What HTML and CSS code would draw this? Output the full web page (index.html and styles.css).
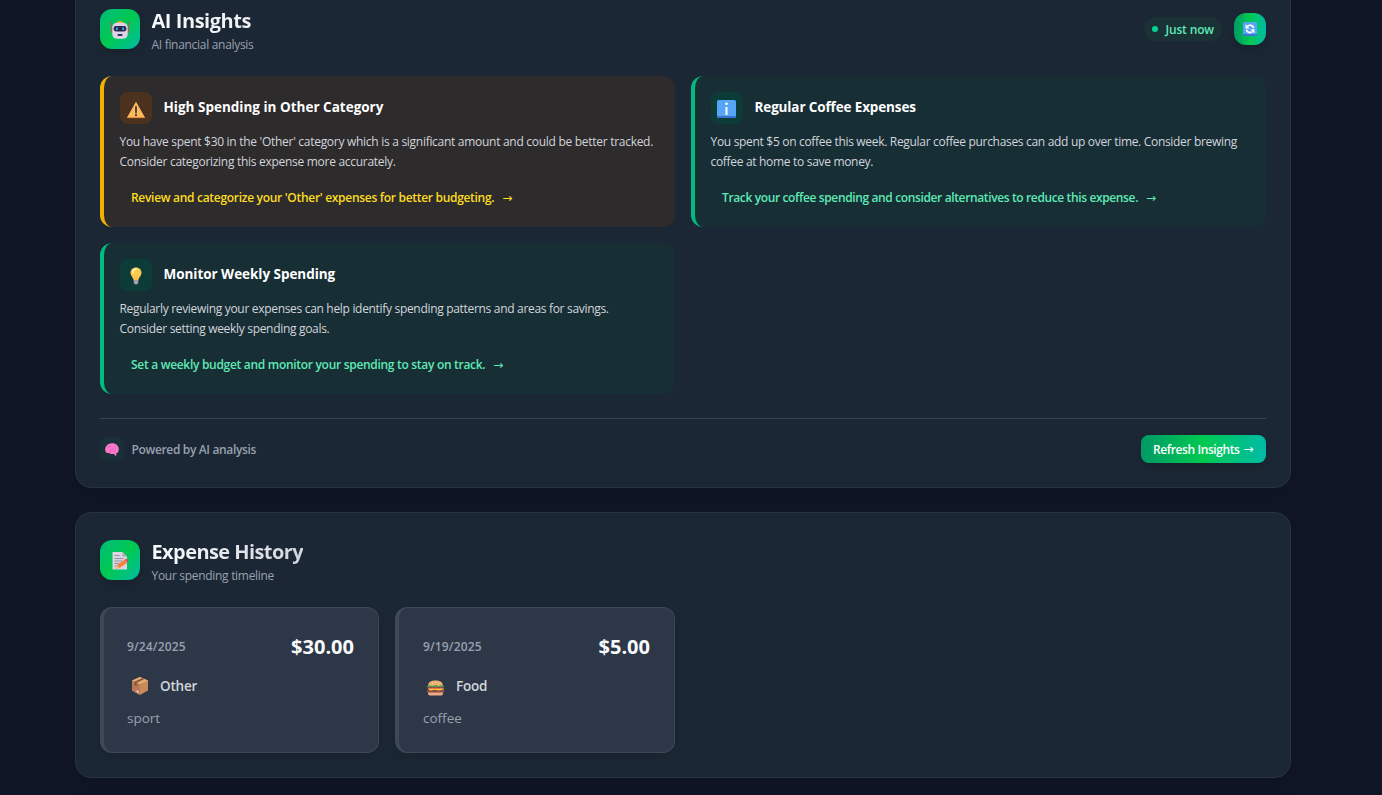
FILE: index.html
```html
<!DOCTYPE html>
<html lang="en">
<head>
<meta charset="utf-8">
<title>Expense Tracker</title>
<link rel="stylesheet" href="styles.css">
</head>
<body>
<main class="page">
  <section class="panel">
    <header class="panel-head">
      <div class="brand">
        <div class="badge">
          <svg width="20" height="20" viewBox="0 0 20 20"><rect x="7" y="2.200" width="6" height="3" rx="1.400" fill="#f9a825"/><path d="M1.600 3v7M18.400 3v7" stroke="#c2456b" stroke-width="1"/><rect x="1" y="9" width="2.400" height="5" rx="1" fill="#d0486a"/><rect x="16.600" y="9" width="2.400" height="5" rx="1" fill="#d0486a"/><rect x="2.300" y="3.700" width="15.400" height="16" rx="4.500" fill="#ddd3e6"/><rect x="3.600" y="7" width="12.800" height="5.400" rx="2.400" fill="#28264a"/><rect x="6" y="8.200" width="1.700" height="3" rx=".8" fill="#35b6f2"/><rect x="12.300" y="8.200" width="1.700" height="3" rx=".8" fill="#35b6f2"/><rect x="7.500" y="15" width="5" height="2" rx=".8" fill="#36304e"/></svg>
        </div>
        <div>
          <h2 class="title t-ai">AI Insights</h2>
          <p class="subtitle">AI financial analysis</p>
        </div>
      </div>
      <div class="status">
        <span class="pill"><i class="dot"></i><span class="label">Just now</span></span>
        <button class="sync" aria-label="Refresh">
          <svg width="14" height="14" viewBox="0 0 14 14"><rect width="14" height="14" rx="1.400" fill="#56a4f5"/><path d="M0 12h14v.8q0 1.200-1.200 1.200H1.200Q0 14 0 12.800z" fill="#4076d8"/><path d="M10.600 6.200c-.4-3-4.200-3.800-6.100-1.900M3.400 7.600c.4 3 4.200 3.800 6.100 1.900" fill="none" stroke="#fff" stroke-width="1.700"/><path d="M2.500 2.300v4.200h4.100zM11.500 11.500V7.300H7.400z" fill="#fff"/></svg>
        </button>
      </div>
    </header>

    <div class="insights">
      <article class="insight warn">
        <div class="insight-head">
          <span class="insight-icon"><svg width="20" height="18" viewBox="0 0 20 18"><path d="M10 1.500 18.500 16.600h-17z" fill="#fdb95c" stroke="#fdb95c" stroke-width="1" stroke-linejoin="round"/><path d="M1.200 16h17.600l.3.900H.9z" fill="#e88a3d"/><path d="M10 6v5.600" stroke="#453a43" stroke-width="1.800" stroke-linecap="round"/><circle cx="10" cy="14.200" r="1.100" fill="#453a43"/></svg></span>
          <h3 class="h-a">High Spending in Other Category</h3>
        </div>
        <p class="p-a">You have spent $30 in the 'Other' category which is a significant amount and could be better tracked.<br>Consider categorizing this expense more accurately.</p>
        <a class="action"><span>Review and categorize your 'Other' expenses for better budgeting.</span><span class="arrow">→</span></a>
      </article>
      <article class="insight">
        <div class="insight-head">
          <span class="insight-icon info"><svg width="19" height="18" viewBox="0 0 19 18"><rect width="19" height="18" rx="1.600" fill="#54a5f7"/><path d="M0 16h19v.6q0 1.400-1.400 1.400H1.400Q0 18 0 16.600z" fill="#3d70d5"/><path d="M9.500 7v8" stroke="#fff" stroke-width="2"/><circle cx="9.500" cy="3.700" r="1.300" fill="#fff"/></svg></span>
          <h3 class="h-b">Regular Coffee Expenses</h3>
        </div>
        <p class="p-b">You spent $5 on coffee this week. Regular coffee purchases can add up over time. Consider brewing<br>coffee at home to save money.</p>
        <a class="action a-b"><span>Track your coffee spending and consider alternatives to reduce this expense.</span><span class="arrow">→</span></a>
      </article>
      <article class="insight">
        <div class="insight-head">
          <span class="insight-icon bulb"><svg width="12" height="18" viewBox="0 0 12 18"><path d="M6 .5c3.300 0 5.500 2.300 5.500 5.200 0 3.300-2.700 4.300-3.300 8H3.800C3.200 10 .5 9 .5 5.700.5 2.800 2.700.5 6 .5z" fill="#ffc94d"/><path d="M3 5.500C3 3.500 4 2.300 6 2" stroke="#fff0b0" stroke-width="1.800" fill="none" stroke-linecap="round"/><path d="m4.500 9 .7 4.500M7.500 9l-.7 4.500" stroke="#f4b04d" stroke-width=".8"/><path d="M3.700 13.300h4.600v2.500L7 17.500H5l-1.300-1.700z" fill="#a89bb5"/></svg></span>
          <h3 class="h-c">Monitor Weekly Spending</h3>
        </div>
        <p class="p-c">Regularly reviewing your expenses can help identify spending patterns and areas for savings.<br>Consider setting weekly spending goals.</p>
        <a class="action"><span>Set a weekly budget and monitor your spending to stay on track.</span><span class="arrow">→</span></a>
      </article>
    </div>

    <footer class="panel-foot">
      <div class="powered">
        <span class="brain"><svg width="14" height="13" viewBox="0 0 14 13"><path d="M.2 7C0 3.200 3 .3 7 .3c4 0 6.800 2.600 6.800 6 0 2.400-1 3.700-2.600 4.200l.2 2-1.500.2-.7-2C6 12 4.300 9.600 2.700 10 1.100 10 .3 8.900.2 7z" fill="#fb78cc"/><path d="M2 5.500C3 3.200 4.500 4 6 2.500M5 7c1.500.4 2.500-.5 2.700-2M8 8.300c1.500 0 2.500-1 2.500-3M4 9c1 .3 2 0 2.500-.7M9 2.500l2 1.200" stroke="#e05cb0" stroke-width=".8" fill="none"/></svg></span>
        <span class="label">Powered by AI analysis</span>
      </div>
      <button class="refresh"><span class="label">Refresh Insights</span><span class="arrow">→</span></button>
    </footer>
  </section>

  <section class="panel">
    <header class="panel-head">
      <div class="brand">
        <div class="badge">
          <svg width="16" height="20" viewBox="0 0 16 20"><path d="M.5 2h10L15 6.500V19.500H.5z" fill="#d9d6e2"/><path d="M10.500 2v4.500H15z" fill="#aaa5b8"/><path d="M2.500 8.500h9M2.500 11h8M2.500 13.500h5M2.500 16h3M2.500 5.500h5" stroke="#8f8b9c" stroke-width=".9"/><path d="m3.700 18.800 1.500-3.900 7.300-5.100 2.400 3.200-7.500 5.100z" fill="#fa7e3c"/><path d="m12.500 9.800 1.500-1q1 0 1.900 1.300.3 1.100-.9 2.300z" fill="#e94f57"/><path d="m3.700 18.800 1.500-3.900 2.200 3.200z" fill="#f3b88d"/></svg>
        </div>
        <div>
          <h2 class="title t-ex">Expense History</h2>
          <p class="subtitle">Your spending timeline</p>
        </div>
      </div>
    </header>
    <div class="expenses">
      <article class="expense">
        <div class="expense-top"><time>9/24/2025</time><strong>$30.00</strong></div>
        <div class="category"><span class="cat-icon"><svg width="18" height="18" viewBox="0 0 18 18"><path d="M9 0 17 3.500v10L9 18 1 13.500v-10z" fill="#c98a57"/><path d="m1 3.500 8 3.800V18l-8-4.500z" fill="#b97956"/><path d="M1 3.500 9 0l8 3.500-8 3.800z" fill="#e2ac72"/><path d="M3.400 4.700 11.500 1l2.100 1L5.600 5.800v3.700L3.400 8.300z" fill="#87543f"/><path d="m5.600 13.200 2 .9v2l-2-.9z" fill="#eedbe8"/></svg></span><span>Other</span></div>
        <p>sport</p>
      </article>
      <article class="expense">
        <div class="expense-top"><time>9/19/2025</time><strong>$5.00</strong></div>
        <div class="category"><span class="cat-icon low"><svg width="19" height="16" viewBox="0 0 19 16"><path d="M2 6.500C2 2 5 .5 9.500.5S17 2 17 6.500z" fill="#e9ae70"/><path d="M2 12h15v1.500q0 2-2 2H4q-2 0-2-2z" fill="#f0a987"/><rect x=".5" y="9.500" width="18" height="3" rx="1.500" fill="#8a4c43"/><path d="M1.500 8h16v1.400l-5 1.200L9 9.800l-5 .6z" fill="#ffd43b"/><rect x="2" y="7.300" width="15" height="1.300" fill="#e9325b"/><path d="M.3 6.500 3 5.300l3.500.6 3-.6 3.500.6 3-.6 2.700 1.200-2 .9-3-.4-4.200.4L5 7l-3 .4z" fill="#4b9b43"/><path d="M6 3.500h1M9 2.500h1M12 4h1" stroke="#fff0c8" stroke-width=".8"/></svg></span><span>Food</span></div>
        <p>coffee</p>
      </article>
    </div>
  </section>
</main>
</body>
</html>
```
FILE: styles.css
```css
* { box-sizing: border-box; }
html { height: 100%; overflow: hidden; }
body {
  margin: 0;
  height: 100%;
  overflow: hidden;
  background: #101626;
  color: #f3f4f6;
  font-family: "Open Sans", "Noto Sans", sans-serif;
  font-size: 12px;
  line-height: 16px;
  white-space: nowrap;
}
h2, h3, p { margin: 0; }
svg { display: block; flex: none; }
button { border: 0; margin: 0; padding: 0; font: inherit; color: #fff; }

.page {
  width: 1216px;
  margin: -19px 0 0 75px;
  display: flex;
  flex-direction: column;
  gap: 24px;
}
.panel {
  flex: none;
  padding: 24px;
  border: 1px solid #29333f;
  border-radius: 16px;
  background: #1b2734;
  box-shadow: 0 10px 15px rgba(0, 0, 0, .1);
}
.panel-head { display: flex; justify-content: space-between; align-items: center; height: 46px; margin-bottom: 24px; }
.brand { display: flex; align-items: center; gap: 11.5px; }
.badge {
  width: 40px;
  height: 40px;
  border-radius: 12px;
  display: grid;
  place-items: center;
  background: linear-gradient(135deg, #00bc7d, #00c950 50%, #00bba7);
  box-shadow: 0 5px 10px rgba(0, 0, 0, .13);
}
.title {
  width: max-content;
  padding-top: 2px;
  font-size: 20px;
  line-height: 28px;
  font-weight: 700;
  background: linear-gradient(90deg, #f9fafb, #eceef1);
  -webkit-background-clip: text;
  background-clip: text;
  color: transparent;
}
.title.t-ex { background-image: linear-gradient(90deg, #f9fafb, #d1d5dc); }
.subtitle { margin-top: 2px; color: #99a1af; }

.status { display: flex; align-items: center; gap: 12px; }
.label { padding-top: 2px; }
.pill {
  display: flex;
  align-items: center;
  gap: 7.500px;
  width: 78px;
  height: 24px;
  padding-left: 8px;
  border-radius: 12px;
  background: #1a3136;
  color: #5ee9b5;
  font-weight: 600;
}
.dot { width: 6px; height: 6px; border-radius: 50%; background: #00d492; }
.sync {
  width: 32px;
  height: 32px;
  border-radius: 12px;
  display: grid;
  place-items: center;
  background: linear-gradient(90deg, #009966, #00c950 50%, #00bba7);
  box-shadow: 0 5px 10px rgba(0, 0, 0, .13);
}

.insights { display: grid; grid-template-columns: 1fr 1fr; gap: 16px; }
.insight {
  height: 151px;
  padding: 16px;
  border-left: 4px solid #00bc7d;
  border-radius: 12px;
  background: #182e35;
}
.insight.warn { border-color: #f0b100; background: #2e2b2d; }
.insight-head { display: flex; align-items: center; gap: 11.5px; margin-bottom: 8px; }
.insight-icon {
  width: 32px;
  height: 32px;
  border-radius: 8px;
  display: grid;
  place-items: center;
  padding-top: 3px;
  background: #0b3c38;
}
.insight-icon.info { padding: 2px 1px 0 0; }
.insight-icon.bulb { padding: 1px 1px 0 0; }
.warn .insight-icon { background: #4c321e; }
.insight h3 { margin-top: -2px; font-size: 13.5px; line-height: 20px; font-weight: 700; color: #fff; }
.insight p { margin-left: -.5px; line-height: 19.5px; color: #d1d5dc; }
.action { display: flex; gap: 8px; margin-top: 13px; padding: 6px 11px; color: #5ee9b5; font-weight: 600; }
.warn .action { color: #fddc20; }
.arrow { font-family: "DejaVu Sans", sans-serif; font-size: 12px; font-weight: 400; }

.panel-foot {
  display: flex;
  justify-content: space-between;
  margin-top: 24px;
  padding-top: 16px;
  border-top: 1px solid #364153;
  height: 45px;
}
.powered { display: flex; align-items: center; gap: 7.500px; height: 28px; color: #99a1af; font-weight: 600; }
.brain { width: 24px; height: 24px; border-radius: 8px; display: grid; place-items: center; background: #193136; }
.refresh {
  display: flex;
  align-items: center;
  gap: 4px;
  width: 125px;
  height: 28px;
  padding-left: 12px;
  border-radius: 8px;
  background: linear-gradient(90deg, #009966, #00c950 50%, #00bba7);
  box-shadow: 0 5px 10px rgba(0, 0, 0, .13);
  font-weight: 600;
}

.expenses { display: grid; grid-template-columns: 279px 280px; gap: 16px; }
.expense {
  height: 146px;
  padding: 24px 24px 24px 23px;
  border: 1px solid #3e4858;
  border-left-width: 4px;
  border-radius: 12px;
  background: #2d3748;
  box-shadow: 0 5px 10px rgba(0, 0, 0, .1);
}
.expense + .expense { padding-left: 24px; }
.expense-top { display: flex; justify-content: space-between; align-items: center; height: 30px; }
.expense time { color: #99a1af; font-weight: 600; letter-spacing: .15px; }
.expense strong { font-size: 20px; line-height: 28px; font-weight: 700; color: #f9fafb; }
.category { display: flex; align-items: center; gap: 8px; height: 24px; margin-top: 12px; font-size: 13.5px; font-weight: 600; color: #d1d5dc; }
.cat-icon { width: 25px; height: 24px; display: grid; place-items: center; }
.cat-icon.low { padding-top: 4px; }
.expense p { margin-top: 10px; font-size: 13.5px; line-height: 20px; color: #99a1af; }

/* Tracking */
.title { letter-spacing: -.45px; }
.title.t-ex { letter-spacing: -.58px; }
.subtitle, .insight p, .action { letter-spacing: -.3px; }
.insight .p-a { letter-spacing: -.285px; }
.insight .p-b, .insight .p-c { letter-spacing: -.313px; }
.action.a-b { letter-spacing: -.37px; }
.pill { letter-spacing: -.15px; }
.refresh { letter-spacing: -.4px; }
.powered { letter-spacing: -.35px; }
.insight .h-a { letter-spacing: 0; }
.insight .h-b { letter-spacing: -.13px; }
.insight .h-c { letter-spacing: -.04px; }
.category { letter-spacing: -.2px; }
```
